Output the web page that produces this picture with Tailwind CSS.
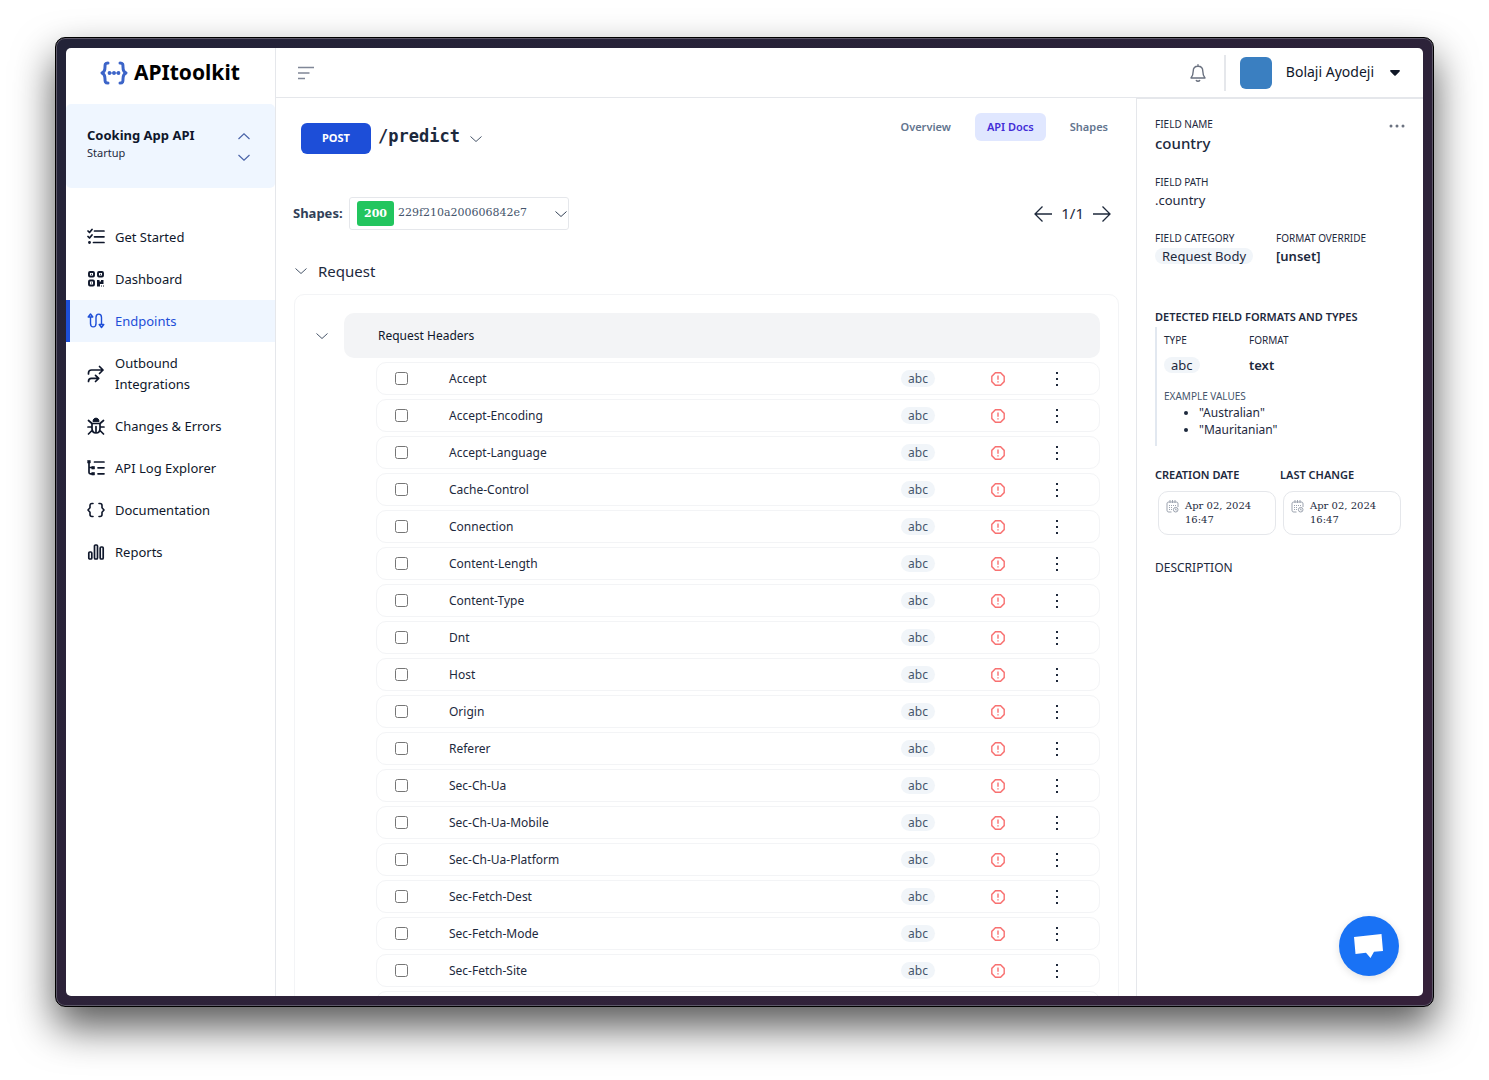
<!DOCTYPE html>
<html lang="en">
<head>
<meta charset="utf-8">
<meta name="viewport" content="width=device-width, initial-scale=1">
<title>APItoolkit - /predict</title>
<script src="https://cdn.jsdelivr.net/npm/@tailwindcss/browser@4"></script>
</head>
<body class="bg-white font-['Noto_Sans',sans-serif] text-slate-800">
<div class="flex h-screen px-[55px] pt-[37px] pb-[73px]">
<div class="flex min-w-0 flex-1 rounded-[10px] border border-black bg-linear-to-br from-[#232338] to-[#35213a] p-[10px] shadow-[0_20px_40px_rgba(0,0,0,0.66),inset_0_0_0_1px_#5d5868]">
<div class="relative flex min-w-0 flex-1 overflow-hidden rounded-[5px] bg-white">

  <!-- Sidebar -->
  <aside class="flex w-[210px] shrink-0 flex-col border-r border-gray-200">
    <a href="#" class="flex h-14 items-center gap-[6px] pb-[6px] pl-[34px]">
      <svg class="h-6 w-7" viewBox="0 0 28 24" fill="none" stroke="#3c64c8" stroke-width="3" stroke-linecap="round" stroke-linejoin="round"><path d="M8 2C5 2 5 3.500 5 6c0 3.500-.5 5-3 6 2.500 1 3 2.500 3 6 0 2.500 0 4 3 4M20 2c3 0 3 1.500 3 4 0 3.500.5 5 3 6-2.500 1-3 2.500-3 6 0 2.500 0 4-3 4"/><path d="M8.500 12h11" stroke-width="1"/><g fill="#3c64c8" stroke="none"><circle cx="9.500" cy="12" r="1.900"/><circle cx="14" cy="12" r="1.900"/><circle cx="18.500" cy="12" r="1.900"/></g></svg>
      <span class="text-[21px] font-bold text-black">APItoolkit</span>
    </a>
    <button class="flex h-[84px] items-center justify-between rounded-[5px] bg-[#eff6ff] pr-[25px] pb-[6px] pl-[21px] text-left">
      <span class="flex flex-col">
        <span class="text-[13px] leading-5 font-bold text-slate-900">Cooking App API</span>
        <span class="text-[11px] leading-4">Startup</span>
      </span>
      <svg class="mt-2 h-7 w-3" viewBox="0 0 12 28" fill="none" stroke="#4a64a8" stroke-width="1.200"><path d="M.5 6 6 .8 11.500 6M.5 22 6 27.200 11.500 22"/></svg>
    </button>
    <nav class="mt-7 flex flex-col text-[13px] leading-[21px] text-slate-900">
      <a href="#" class="flex min-h-[42px] items-center gap-[10px] border-l-4 border-transparent pl-[17px]">
        <svg class="size-[18px]" viewBox="0 0 18 18" fill="none" stroke="currentColor" stroke-width="1.700" stroke-linecap="round" stroke-linejoin="round"><path d="M1 3 2.500 4.500 5 1.500M1 8.500 2.500 10 5 7M7.500 3H17M7.500 8.800H17M6.500 14.500H17"/><circle cx="2.500" cy="14.500" r=".6" fill="currentColor"/></svg>
        <span>Get Started</span></a>
      <a href="#" class="flex min-h-[42px] items-center gap-[10px] border-l-4 border-transparent pl-[17px]">
        <svg class="size-[18px]" viewBox="0 0 18 18" fill="none" stroke="currentColor" stroke-width="1.900"><rect x="2" y="2" width="5" height="4.500" rx="1"/><rect x="11" y="2" width="5" height="4.500" rx="1"/><rect x="2" y="10.500" width="5" height="5" rx="1"/><path d="M4 4.300h1M13 4.300h1M4 13h1" stroke-width="1"/><path d="M10 10h2.500v1.500H14V10h2.500v4H13v2.500h-3z" fill="currentColor" stroke="none"/><path d="M14 16h1M16 16h1" stroke-width="1"/></svg>
        <span>Dashboard</span></a>
      <a href="#" aria-current="page" class="flex min-h-[42px] items-center gap-[10px] border-l-4 border-[#1d4ed8] bg-[#eff6ff] pl-[17px] text-[#1d4ed8]">
        <svg class="size-[18px]" viewBox="0 0 18 18" fill="none" stroke="currentColor" stroke-width="1.400" stroke-linecap="round" stroke-linejoin="round"><path d="M3.500 5v6.500c0 4.500 5.500 4.500 5.500 0v-6c0-4.500 5.500-4.500 5.500 0V12M1.200 5l2.300-3 2.300 3zM12.200 12.500l2.300 3 2.300-3z"/></svg>
        <span>Endpoints</span></a>
      <a href="#" class="flex min-h-[63px] items-center gap-[10px] border-l-4 border-transparent pl-[17px]">
        <svg class="size-[18px] shrink-0" viewBox="0 0 18 18" fill="none" stroke="currentColor" stroke-width="1.700" stroke-linecap="round" stroke-linejoin="round"><path d="M1.500 9V8c0-2 1-3 3-3H16M12.500 1.500 16 5l-3.500 3.500M1.500 16.500c0-2 1-3.200 3-3.200h7M8.500 10.300l3.200 3-3.200 3.200"/></svg>
        <span>Outbound<br>Integrations</span></a>
      <a href="#" class="flex min-h-[42px] items-center gap-[10px] border-l-4 border-transparent pl-[17px]">
        <svg class="size-[18px]" viewBox="0 0 18 18" fill="none" stroke="currentColor" stroke-width="1.700" stroke-linecap="round" stroke-linejoin="round"><path d="M6 4.200C6 0 12 0 12 4.200z" fill="currentColor" stroke-width="1"/><path d="M5 6.500h8v5c0 6-8 6-8 0zM9 9.500V15M1 10h4M13 10h4M1.500 3.500 5 6.500M16.500 3.500 13 6.500M1.500 17 5 13.500M16.500 17 13 13.500"/></svg>
        <span>Changes &amp; Errors</span></a>
      <a href="#" class="flex min-h-[42px] items-center gap-[10px] border-l-4 border-transparent pl-[17px]">
        <svg class="size-[18px]" viewBox="0 0 18 18" fill="none" stroke="currentColor" stroke-width="1.700" stroke-linecap="round"><path d="M2 3v10.500c0 1 .3 1.300 1.300 1.300H6M2 8.500h4M7.500 3H17M11 8.800h6M11 14.800h6"/><path d="M.8 1.500h2.500V4H.8zM5 7.500h2.500V10H5zM5 13.500h2.500V16H5z" fill="currentColor" stroke-width=".6"/></svg>
        <span>API Log Explorer</span></a>
      <a href="#" class="flex min-h-[42px] items-center gap-[10px] border-l-4 border-transparent pl-[17px]">
        <svg class="size-[18px]" viewBox="0 0 18 18" fill="none" stroke="currentColor" stroke-width="1.600" stroke-linecap="round" stroke-linejoin="round"><path d="M6 2.500H5c-1.300 0-2 .7-2 2v2.300L1 9l2 2.200v2.300c0 1.300.7 2 2 2h1M12 2.500h1c1.300 0 2 .7 2 2v2.300L17 9l-2 2.200v2.300c0 1.300-.7 2-2 2h-1"/></svg>
        <span>Documentation</span></a>
      <a href="#" class="flex min-h-[42px] items-center gap-[10px] border-l-4 border-transparent pl-[17px]">
        <svg class="size-[18px]" viewBox="0 0 18 18" fill="none" stroke="currentColor" stroke-width="1.700"><rect x="1.800" y="9" width="3" height="7" rx="1"/><rect x="7.500" y="2" width="3" height="14" rx="1"/><rect x="13.200" y="4" width="3" height="12" rx="1"/></svg>
        <span>Reports</span></a>
    </nav>
  </aside>

  <div class="flex min-w-0 flex-1 flex-col">
    <!-- Top bar -->
    <header class="flex h-[50px] shrink-0 items-center border-b border-gray-200 pr-[23px] pl-[22px]">
      <button aria-label="Toggle menu"><svg class="h-[14px] w-4" viewBox="0 0 16 14" fill="none" stroke="#808797" stroke-width="1.600"><path d="M0 1.500h16M0 7h11.500M0 12.500h7"/></svg></button>
      <button aria-label="Notifications" class="mr-[18px] ml-auto"><svg class="h-[18px] w-4" viewBox="0 0 16 18" fill="none" stroke="#6b7280" stroke-width="1.400" stroke-linecap="round" stroke-linejoin="round"><path d="M8 .8v1.400M8 2.200c-3 0-4.800 2-4.800 5 0 3.300-.8 5-2.200 6.800h14c-1.400-1.800-2.200-3.500-2.200-6.800 0-3-1.800-5-4.800-5zM6.300 16.500c.7 1 2.700 1 3.400 0"/></svg></button>
      <button class="flex h-9 items-center border-l-2 border-gray-200 pl-[14px]">
        <span class="size-8 rounded-md bg-[#3a7fc1]"></span>
        <span class="ml-[14px] pb-[2px] text-sm text-slate-900">Bolaji Ayodeji</span>
        <svg class="ml-4 h-[6px] w-[10px]" viewBox="0 0 10 6" fill="#111827"><path d="M1 0h8c1 0 1.200 1 .6 1.500L5.700 5.500c-.4.400-1 .4-1.400 0L.4 1.500C-.2 1 0 0 1 0z"/></svg>
      </button>
    </header>

    <div class="flex min-h-0 flex-1">
      <!-- Endpoint docs -->
      <main class="min-w-0 flex-1 overflow-hidden pr-[17px] pl-[18px]">
        <div class="flex items-start justify-between pt-[15px] pl-[7px]">
          <div class="flex items-center pt-[10px]">
            <button class="h-[31px] w-[70px] rounded-md bg-[#1d4ed8] text-[11px] font-bold text-white">POST</button>
            <h1 class="ml-[7px] pb-[6px] font-['DejaVu_Sans_Mono',monospace] text-[17px] leading-6 font-bold">/predict</h1>
            <button aria-label="Choose endpoint" class="ml-[10px]"><svg class="h-[6px] w-3" viewBox="0 0 12 6" fill="none" stroke="#475569"><path d="M.5.5 6 5.500 11.500.5"/></svg></button>
          </div>
          <nav class="flex gap-[13px] text-[11px] leading-7 font-semibold text-slate-500">
            <a href="#" class="rounded-md px-[11px]">Overview</a>
            <a href="#" aria-current="page" class="rounded-md bg-indigo-100 px-3 text-indigo-700">API Docs</a>
            <a href="#" class="rounded-md px-[11px]">Shapes</a>
          </nav>
        </div>

        <div class="-ml-px mt-[43px] flex items-center">
          <span class="w-14 text-[13px] font-bold text-slate-700">Shapes:</span>
          <button class="flex h-[33px] w-[220px] items-center rounded-[3px] border border-gray-200 pr-px pl-[7px] font-['DejaVu_Serif',serif] text-[11px] text-slate-600">
            <span class="rounded-[3px] bg-[#22c55e] px-[7px] leading-[25px] font-bold text-white">200</span>
            <span class="ml-1">229f210a200606842e7</span>
            <svg class="ml-auto h-[6px] w-3" viewBox="0 0 12 6" fill="none" stroke="#334155"><path d="M.5.5 6 5.500 11.500.5"/></svg>
          </button>
          <div class="mr-2 ml-auto flex items-center gap-[9px] text-[15px]">
            <button aria-label="Previous shape"><svg class="h-4 w-[18px]" viewBox="0 0 18 16" fill="none" stroke="#1e293b" stroke-width="1.300"><path d="M18 8H1M8.500.5 1 8l7.500 7.500"/></svg></button>
            <span>1/1</span>
            <button aria-label="Next shape"><svg class="h-4 w-[18px]" viewBox="0 0 18 16" fill="none" stroke="#1e293b" stroke-width="1.300"><path d="M0 8h17M9.500.5 17 8l-7.500 7.500"/></svg></button>
          </div>
        </div>

        <h2 class="mt-[29px] flex items-center gap-[11px] pl-px text-[15px] leading-6">
          <svg class="h-[6px] w-3" viewBox="0 0 12 6" fill="none" stroke="#475569"><path d="M.5.5 6 5.500 11.500.5"/></svg>
          Request
        </h2>

        <section class="mt-[11px] rounded-[10px] border border-gray-100 px-[18px] pt-[18px]">
          <div class="flex items-center gap-4 pl-[3px]">
            <button aria-label="Collapse request headers"><svg class="h-[6px] w-3" viewBox="0 0 12 6" fill="none" stroke="#475569"><path d="M.5.5 6 5.500 11.500.5"/></svg></button>
            <h3 class="flex-1 rounded-[10px] bg-gray-100 pl-[34px] text-xs leading-[45px] text-slate-900">Request Headers</h3>
          </div>
          <ul id="fields" class="mt-1 ml-[63px] flex flex-col gap-1 text-xs"></ul>
        </section>
      </main>

      <!-- Field details -->
      <section class="w-[287px] shrink-0 border-t border-l border-gray-200 px-[18px] text-[13px]">
        <div class="flex justify-between pt-[17px]">
          <div>
            <h4 class="text-[10px] leading-4 uppercase">Field name</h4>
            <p class="text-[15px] leading-[22px] font-medium">country</p>
          </div>
          <button aria-label="More actions" class="flex h-5 items-center"><svg class="h-1 w-4" viewBox="0 0 16 4" fill="#6b7280"><circle cx="2" cy="2" r="1.500"/><circle cx="8" cy="2" r="1.500"/><circle cx="14" cy="2" r="1.500"/></svg></button>
        </div>
        <h4 class="mt-5 text-[10px] leading-4 uppercase">Field path</h4>
        <p class="leading-5">.country</p>
        <div class="mt-5 flex gap-[21px]">
          <div class="w-[100px]">
            <h4 class="text-[10px] leading-4 uppercase">Field category</h4>
            <p class="mt-[2px] w-fit rounded-full bg-slate-100 px-[7px] leading-4">Request Body</p>
          </div>
          <div>
            <h4 class="text-[10px] leading-4 uppercase">Format override</h4>
            <p class="mt-[2px] leading-4 font-semibold">[unset]</p>
          </div>
        </div>
        <h4 class="mt-[45px] text-[11px] leading-4 font-semibold uppercase">Detected field formats and types</h4>
        <div class="mt-[2px] border-l-2 border-slate-200 pt-[5px] pb-2 pl-[7px]">
          <div class="grid grid-cols-[85px_1fr]">
            <div>
              <h5 class="text-[10px] leading-4 uppercase">Type</h5>
              <p class="mt-[9px] w-fit rounded-full bg-slate-100 px-[7px] leading-4">abc</p>
            </div>
            <div>
              <h5 class="text-[10px] leading-4 uppercase">Format</h5>
              <p class="mt-[9px] leading-4 font-semibold">text</p>
            </div>
          </div>
          <h5 class="mt-[15px] text-[10px] leading-4 text-slate-600 uppercase">Example values</h5>
          <ul class="list-disc pl-[35px] text-xs leading-[17px]">
            <li>"Australian"</li>
            <li>"Mauritanian"</li>
          </ul>
        </div>
        <div class="mt-[21px] flex gap-1">
          <div>
            <h4 class="text-[11px] leading-4 font-semibold uppercase">Creation date</h4>
            <div class="mt-2 ml-[3px] flex h-11 w-[118px] gap-[6px] rounded-[10px] border border-gray-200 pt-[7px] pl-[7px] font-['DejaVu_Serif',serif] text-[10px] leading-[14px]">
              <svg class="mt-px size-[13px] shrink-0" viewBox="0 0 13 13" fill="none" stroke="#9ca3af"><path d="M5.500 12H3C1.500 12 1 11.500 1 10V4c0-1.500.5-2 2-2h7c1.500 0 2 .5 2 2v3M4 0v3M6.500 0v3M9 0v3"/><path d="M3 5.500h7M3 7.500h4M3 9.500h3" stroke-dasharray="1 1"/><circle cx="9.700" cy="9.700" r="2.300"/><path d="M9.700 8.500V10h1"/></svg>
              <time>Apr 02, 2024<br>16:47</time>
            </div>
          </div>
          <div>
            <h4 class="text-[11px] leading-4 font-semibold uppercase">Last change</h4>
            <div class="mt-2 ml-[3px] flex h-11 w-[118px] gap-[6px] rounded-[10px] border border-gray-200 pt-[7px] pl-[7px] font-['DejaVu_Serif',serif] text-[10px] leading-[14px]">
              <svg class="mt-px size-[13px] shrink-0" viewBox="0 0 13 13" fill="none" stroke="#9ca3af"><path d="M5.500 12H3C1.500 12 1 11.500 1 10V4c0-1.500.5-2 2-2h7c1.500 0 2 .5 2 2v3M4 0v3M6.500 0v3M9 0v3"/><path d="M3 5.500h7M3 7.500h4M3 9.500h3" stroke-dasharray="1 1"/><circle cx="9.700" cy="9.700" r="2.300"/><path d="M9.700 8.500V10h1"/></svg>
              <time>Apr 02, 2024<br>16:47</time>
            </div>
          </div>
        </div>
        <h4 class="mt-[25px] text-xs leading-4 uppercase">Description</h4>
      </section>
    </div>
  </div>

  <!-- Chat launcher floats over the page -->
  <button aria-label="Open chat" class="absolute right-6 bottom-5 flex size-[60px] items-center justify-center rounded-full bg-[#1972f5] shadow-[0_2px_8px_rgba(0,0,0,0.12)]">
    <svg class="h-6 w-[30px]" viewBox="0 0 30 24" fill="#fff"><path d="M0 3 27.500 0 29 17l-9 .8L16.500 24 12 18.800 1.500 20z"/></svg>
  </button>
</div>
</div>
</div>
<script>
const headers = ["Accept","Accept-Encoding","Accept-Language","Cache-Control","Connection","Content-Length","Content-Type","Dnt","Host","Origin","Referer","Sec-Ch-Ua","Sec-Ch-Ua-Mobile","Sec-Ch-Ua-Platform","Sec-Fetch-Dest","Sec-Fetch-Mode","Sec-Fetch-Site"];
const rows = headers.map((name, i) => `
<li class="flex h-[33px] items-center rounded-[10px] border border-gray-100 pr-[35px] pl-[18px]">
  <input type="checkbox" id="f${i}" class="size-[13px]">
  <label for="f${i}" class="ml-[41px] flex-1 text-slate-800">${name}</label>
  <span class="w-[34px] rounded-full bg-slate-100 text-center leading-[17px] text-slate-600">abc</span>
  <svg class="ml-[56px] size-[14px]" viewBox="0 0 14 14" fill="none" stroke="#f87171" stroke-width="1.400"><path d="M4.400.8h5.200l3.600 3.600v5.200l-3.600 3.600H4.400L.8 9.600V4.400zM7 3.500v4.300M7 9.200v1.300"/></svg>
  <button aria-label="Options for ${name}" class="ml-[45px] flex w-[14px] justify-center"><svg class="h-[14px] w-[2px]" viewBox="0 0 2 14" fill="#1e293b"><path d="M0 0h2v2H0zM0 6h2v2H0zM0 12h2v2H0z"/></svg></button>
</li>`).join("");
document.getElementById("fields").innerHTML = rows + `<li class="h-[33px] rounded-[10px] border border-gray-100"></li>`;
</script>
</body>
</html>
